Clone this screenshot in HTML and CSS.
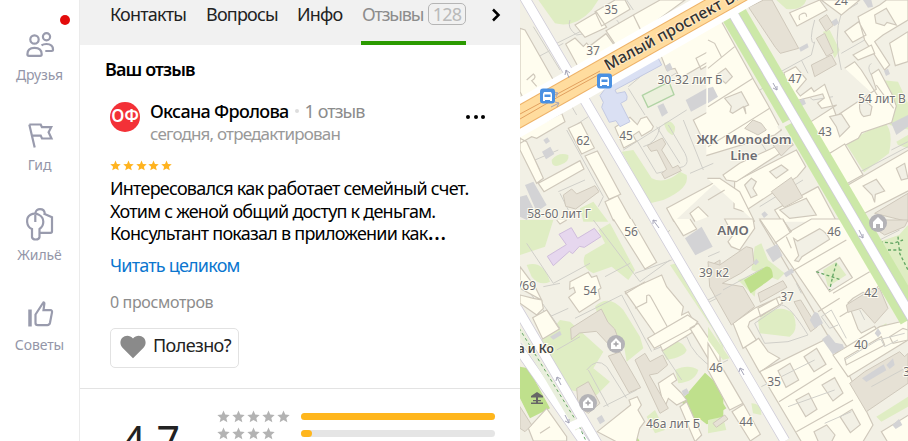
FILE: index.html
```
<!DOCTYPE html>
<html lang="ru">

<head>
    <meta charset="utf-8">
    <meta name="viewport" content="width=device-width, initial-scale=1.0">
    <title>Отзывы</title>
    <link rel="stylesheet" href="styles.css">
</head>

<body>

    <svg class="defs" width="0" height="0">
        <symbol id="star" viewBox="0 0 24 24">
            <path d="M12 1l3.2 7.5 8.2.7-6.2 5.4 1.9 8L12 18.300l-7.100 4.300 1.900-8L.6 9.200l8.200-.7z" />
        </symbol>
    </svg>

    <nav class="sidebar">
        <a class="side-item">
            <svg class="side-icon" viewBox="0 0 30 30">
                <circle cx="9.500" cy="10.500" r="4.200" />
                <circle cx="21.500" cy="7.800" r="3.600" />
                <path d="M2.400 25.300c0-4 2.600-6.500 7.100-6.500s7.200 2.500 7.200 6.500c0 1-.5 1.500-1.500 1.500H4c-1 0-1.600-.5-1.600-1.500z" />
                <path d="M16.500 16.300c1.200-.9 3-1.300 5-1.300 4 0 6.500 2.200 6.500 5.600 0 1-.4 1.400-1.400 1.400h-6.300" />
            </svg>
            <span>Друзья</span>
            <i class="dot"></i>
        </a>
        <a class="side-item">
            <svg class="side-icon" viewBox="0 0 30 30">
                <path d="M4.300 5.500l5.400 23M4.300 5.500h11.400l1.200 2.700h9.300l-2.600 5 2.900 6.300H17l-1.300-2.900H7" />
            </svg>
            <span>Гид</span>
        </a>
        <a class="side-item">
            <svg class="side-icon tall" viewBox="0 0 30 36">
                <path d="M10.500 7c.2-5 8.700-5.500 9.300.5M18.500 7.500l8.500 3.800v14c0 1-.5 1.500-1.500 1.500H15" />
                <path d="M7 23C1 20.500.5 11.500 5.500 8.800c5.700-3 12.800.8 12.800 7 0 3.200-1.600 5.800-3.800 7.200v8c-.5 3.300-7 3.300-7.500 0zM10.300 9v7" />
            </svg>
            <span>Жильё</span>
        </a>
        <a class="side-item">
            <svg class="side-icon" viewBox="0 0 30 30">
                <path class="thick" d="M5 10.500v17" />
                <path d="M10.500 15.500l7.500-11.500c.6-1 1.400-.5 1.400.5l-.9 6.600h6.800c1.500 0 2 1 1.700 2.300L25 23.800c-.4 1.700-1 2.300-2.600 2.300h-9.600c-1.600 0-2.300-.6-2.300-2.200z" />
            </svg>
            <span>Советы</span>
        </a>
    </nav>

    <main class="panel">
        <header class="tabs">
            <a class="tab tab-contacts">Контакты</a>
            <a class="tab tab-questions">Вопросы</a>
            <a class="tab tab-info">Инфо</a>
            <a class="tab active">Отзывы <span class="count">128</span></a>
            <svg class="next" viewBox="0 0 10 14">
                <path d="M2 1.500L7.500 7 2 12.500" />
            </svg>
        </header>

        <section class="review">
            <h2>Ваш отзыв</h2>
            <div class="author">
                <div class="avatar">ОФ</div>
                <div class="who">
                    <p class="name"><b>Оксана Фролова</b><i class="sep"></i><span>1 отзыв</span></p>
                    <p class="date">сегодня, отредактирован</p>
                </div>
                <div class="more"><i></i><i></i><i></i></div>
            </div>
            <div class="stars gold">
                <svg><use href="#star" /></svg><svg><use href="#star" /></svg><svg><use href="#star" /></svg><svg><use href="#star" /></svg><svg><use href="#star" /></svg>
            </div>
            <p class="text">Интересовался как работает семейный счет.<br>Хотим с женой общий доступ к деньгам.<br>Консультант показал в приложении как<span class="dots">…</span></p>
            <a class="read">Читать целиком</a>
            <p class="views">0 просмотров</p>
            <button class="useful">
                <svg viewBox="0 0 26 24">
                    <path d="M13 23.300L2.500 12.800C-.3 9.800-.2 5.300 2.300 2.800 5.200-.1 10-.1 13 3.400 16-.1 20.800-.1 23.700 2.800c2.500 2.500 2.600 7-.2 10z" />
                </svg>
                <span>Полезно?</span>
            </button>
        </section>

        <section class="rating">
            <div class="score">4,7</div>
            <div class="rows">
                <div class="row">
                    <div class="stars">
                        <svg><use href="#star" /></svg><svg><use href="#star" /></svg><svg><use href="#star" /></svg><svg><use href="#star" /></svg><svg><use href="#star" /></svg>
                    </div>
                    <div class="bar"><div class="fill" style="width: 100%"></div></div>
                </div>
                <div class="row">
                    <div class="stars">
                        <svg><use href="#star" /></svg><svg><use href="#star" /></svg><svg><use href="#star" /></svg><svg><use href="#star" /></svg>
                    </div>
                    <div class="bar"><div class="fill" style="width: 5.700%"></div></div>
                </div>
            </div>
        </section>
    </main>

    <svg class="map" viewBox="520 0 388 441">
        <defs>
            <path id="avenue" d="M608 71L780 -23" />
        </defs>

        <!-- north-west blocks -->
        <g transform="translate(520 0) scale(.33333)">
            <path class="park" d="M55 0l50 70q60 15 110-40l20-30zM305 455l35-5 55 85q40 20 85-20l20 10q10 40-70 75l-40 10zM95 480q20-25 50-15 5 20-25 30-25 10-25-15zM432 370q20-15 33 10 0 20-8 26-20-10-25-36zM180 625l40-20 45 60h-75z" />
            <path class="path" d="M40 80l80 130M0 200l130-70M110 130l70-35M150 60q-10 25 20 45l60-10M320 0l20 30M290 60l55 70M325 260l60-50M325 265l50 80M500 100l20 90-70 40M500 330L310 450M370 440q40-10 50-60M350 420l60 100 80-20q20-10 5-40l-50-85M45 480l70-30M45 480l15 30M140 390l110 200-15 30M115 575l80-35M120 580l30 60M410 380l70 110M490 360l60 150M150 310l20 35M160 380l45-30M510 520l70-30M0 430l55 110" />
            <g class="house">
                <path d="M165 75l65-38 30 45-65 30zM225 35l60-35h30l15 28-85 50zM340 45L420 0h75l-130 95zM258 92l82-47 24 50-75 43zM137 132l28-18 25 25 10-10 8 10 50-38 30 42-110 64zM0 85l15 5 85 150-90 55-10-20zM20 240l20-18q12 10-5 20l15 17" />
                <path d="M125 340l10 25-85 50-15-5-35 20v-25zM145 385l38-18 40 77-38 18zM195 468l37-15 70 130-35 15zM255 605l38-18 42 75h-55zM55 550l125-68 12 25-120 68zM0 415l20 10 50 110-20 15-50-100z" />
                <path d="M420 160l180-105v110l-120 70-15-30-25 5zM528 175l50-27 17 30-52 30zM285 382l45-30 22 22 10-18 18-6 20 30-5 10-30 18-8-14-18 12 10 18-38 20zM520 360l45-25 7 12 28-15v60l-50 30z" />
                <path class="open" d="M462 665l-22-40 130-70 32-20M525 665l-15-25 25-20 30 30" />
            </g>
            <path class="stone" d="M382 437l45-23 10 18-12 18 33 54 16-8 10 16-50 24-9-16 15-12-29-58-18 4zM130 585l25-18 15 15 55-25 12 18-70 52-30-8z" />
            <path class="grey" d="M497 300l80-45 18 35-82 45zM412 318l18-8 14 28-18 12zM435 198l15-10 8 18-16 10zM70 420l12-8 8 12-12 8zM66 455l25-15 12 22-25 16zM15 555l25-10 40 70-30 20zM0 590l20-5 25 50-25 25-20-10z" />
            <path class="blue" d="M275 240l135-75 15 30-140 75 5 10 25-5q10 15 5 25l-18 10 28 55-30 15-12-18-20 5-23-45 5-15-10-20z" />
            <path class="court" d="M367 286l80-40 15 38-78 38z" />
        </g>

        <!-- north-east blocks -->
        <g transform="translate(708 0) scale(.33333)">
            <path class="park" d="M205 0l30 27q50 5 60-27zM345 95l20-5 30 60-15 25zM413 430l115-65q30 25 15 95l-75 57zM520 240l50 5 35 75v70l-60-15-25-60zM565 425l35-20v40l-30-10z" />
            <path class="path" d="M320 60q-20 70 0 70M200 225l110-60 10-40M280 180l20 40M400 210q-25-100 0-170l50-30M400 160l70-40 50-40M275 290q20-10 40 10l60-10M0 240l65-40M490 190q-15 10 0 35M0 360l190-110M20 440l110-60M410 540L600 440M155 620l130-80M160 430l20 30M550 450l50-25" />
            <g class="house">
                <path class="open" d="M-5 72l40-17 105 190 40 70 40 75-20 15-205 62" />
                <path class="line" d="M0 205l80-65M0 320l135-85M0 440l185-115M0 120l20 10 20 40" />
                <path class="yard" d="M25 225l28-20 20 25-20 20zM50 295l50-20 22 40-12 5 4 22-8-22-32 20-8-5 4-16z" />
                <path d="M245 38l90-38 22 30-90 48zM275 60q-5-15 5-18 15-8 16 8M340 0l60 45L455 0zM450 50l65-35 20-15h65v60l-75 45-25 20 45 70-15 15-60-90zM410 95l42-30 22 40-40 22zM545 130l55-35v90l-38 12z" />
                <path class="yard" d="M500 45l35-20 30 50-28-8-8 10-25-8z" />
                <path d="M228 218l35-18 32 38-30 35 12 15 33-25 8 12 32-22 35 95 120-80-15-45 22-15 40 75 13 35-14 50-90 30-10 17-95 50-55-95 85-55-45 10-12-16 20-15-5-12-98 25zM410 205l30-20 20 25 60 95M435 165l55-30 10 25-50 20zM505 255l52 70" />
                <path class="yard" d="M365 350l35-8 25 38-30 30-10-30zM455 310l15-10 22 20-5 25-20 5q-15-12-12-40z" />
                <path d="M362 462l48-30 55 92-50 28z" />
                <path class="open" d="M602 450l-182 105 45 87 137-70" />
                <path class="yard" d="M465 558l40-20 25 35-28 10-2 24-8-22zM565 505l25-15 10 45-20 5z" />
                <path d="M80 545l185-95 28 50-25 30-160 105-30-10z" />
                <path class="yard" d="M185 515l35-20 20 15-35 25zM110 555l20-20 15 10-10 20 12 20-18 8z" />
                <path class="open" d="M222 665l-22-35 130-70 56 105M45 525l50-35 150-70 10 15-170 110-30-5zM-2 535h37l60 40 45 90" />
                <path class="yard" d="M215 630l80-35 30 50-80 10z" />
                <path class="line" d="M0 600l50-30" />
            </g>
            <path class="stone" d="M122 22l45-22h25l80 145-55 15-15-18zM333 60l23-16 20 32-22 18zM325 115l25-15 26 57-20 12zM310 195l60-30 15 28-65 37zM190 575l60-43 34 60-55 30zM500 640l100-60v85zM110 385l25-25 25 10 15 20-25 15zM195 435l40-22 20 20-35 35z" />
            <path class="grey" d="M273 143l25-13 4 12-24 13zM370 65l15-10 8 14-14 10zM465 0h25l5 20-15 3zM272 303l15-8 7 16-15 8zM550 370l50-25v35l-35 25zM0 265l15-5 15 30-30 20zM528 212l12-6 6 16-12 6zM160 642l10-8 10 10-12 10z" />
        </g>

        <!-- south-west blocks -->
        <g transform="translate(520 220) scale(.33333)">
            <path class="park" d="M0 0h100l-25 80-75 25zM195 105l60-35-20-40 35-20 75 140-20 30-50-40-55 20q-40-20-25-55zM20 135q50-15 70 50-30 15-55-15zM225 260q40-40 85 10l50 80 10 35-50 40-10-60-40 20-30-85zM120 300l30 5 100 90-30 50 50 40-40 40-110-20-40-70-20-70 30-30zM425 390q50-50 75 0-5 20-60 30zM465 450q40-20 70 0-10 35-60 40zM450 135l20-5 140 230v30l-30-60zM380 590l25-20 30 60-30 10z" />
            <path class="green" d="M485 540l70-82 55 50v95l-50 10-25-20-30 10zM0 440l25 5 65 120-60 30-30-60zM300 650l35-25 25 40h-60z" />
            <path class="path" d="M20 70l80 120 110-60M220 0l140 185 90-65M70 200l50-10M90 290l55-25M165 295l140-70M305 225l90 170M200 450q30-40 60-10l60 95M205 450l60 110M400 390l100-40q20 60 90 100M425 390l60 90M540 260l60-30M345 160l110-40M440 40l10-10M255 170l75-40M110 390l70-40M250 560l100-50M0 180l100 130M60 240l60 85" />
            <g class="house">
                <path class="open" d="M280-3l95 150 35-20-75-130M458-3l32 50 40-20-20-30M110 0l10 12 20-12" />
                <path d="M150 185l55-28 10 15 15-5 13 37-8 5 5 28-62 40-32-45 20-15-5-15-12 5zM315 215l110-50 15 35 50 60-5 25 20-10 28 52-105 65-20-45z" />
                <path class="line" d="M315 222l60-37M345 265l35-18v-20q8-5 12 3l50 90" />
                <path d="M383 355l120-70 30 20-10 15-120 65zM510 325l25-15 65 95v70z" />
                <path d="M0 225l40 10 25 5 5 25-20 20L0 250zM38 293l42-23 38 57-50 30zM0 140l45 60 20 40-65-35zM25 625l55-60 60 85v13H40zM60 640l30-20M232 635l100-80-5-15 25-10 12 25-10 15 20 35-15 20-10 40h-60zM415 490l45-30 10 20-15 10 30 30 15 20-30 15-25-20-12 30zM480 560l20-15 45 100-20 20z" />
            </g>
            <path class="pink" d="M117 43l37-20 19 32 50-30 20 25-50 32-15-3-20 22-10-7-48 43-18-28 57-35z" />
            <path class="stone" d="M152 325l92-58 20 40 20 20 15 40-25 15-45-48-50 5-25 20zM265 408l35-12 62 107-35 15zM170 505l35-20 35 65-35 30-30-20zM345 420l30-20 15 25 38-20 15 30-30 25-25 5 57 100-25 15zM565 140l35-20v110h-5zM0 560l35 55-20 20-15-10z" />
            <path class="grey" d="M495 55l50-35 33 60-52 26zM90 350l30-18 5 12-25 15zM230 595l15-10 10 18-15 10zM485 513l15-8 8 14-16 10z" />
        </g>

        <!-- south-east blocks -->
        <g transform="translate(708 220) scale(.33333)">
            <path class="park" d="M140 80l20-10 20 50 50 40-20 20-80-30zM90 180l60-20-10 70zM513 65l60-20 27-30v195q-70-50-87-145zM505 590l95-60v30l-80 45zM515 320l20-10 5 30zM130 550q30 0 30 35l-25-5zM0 600l45-10 10 40-55 10zM0 320l65 95-20 5-45-60z" />
            <path class="green" d="M0 480l55 85-55 35z" />
            <g class="house">
                <path class="open" d="M50-3h85l5 28-45 65-25-10-10-15 15-20z" />
                <path d="M155-3h70l20 38 65-38h90l100 170 15 25-20 30-30-5-30 18-15 14 30 78 10 12 40-20 10 18-70 42-20 6z" />
                <path class="line" d="M155 0l245 415M225 0l25 35-50 35M250 155l165-95M235 50l15 35M375 220l110-65M330 275l65-40M395 290l30-18" />
                <path class="yard" d="M257 55l12 8 66-37q20 10 30 32l-83 52-10 15-12-3 12-15zM325 155l70-42 38 60-68 42z" />
                <path d="M75 310l65-45 75-35 8 20-98 55-5 15 25 40-40 25zM150 265l55-30 8 20-55 35zM112 380l40-25 28 40 35 20-60 42z" />
                <path d="M155 455l200-98 50 70 90 188-30 50H280z" />
                <path class="line" d="M213 545l160-100M265 635l170-95" />
                <path d="M375 405l140-85 85-20v60l-180 110zM410 415l110-65 10 25-115 60z" />
                <path d="M545 350l40-25 15 5v30l-45 10zM0 370l105 180-40 20L0 450zM72 575l35-22 50 90-30 20zM520 635l85-52v85h-65z" />
            </g>
            <path class="park" d="M150 300q60-55 105-20 20 50-10 70l-90-10zM345 150l40-25 30 40-55 35z" />
            <path class="stone" d="M0 125l35 10 80-55 18 5 5 45-40 30-55 30 62 10 35 60-70 55L5 200zM150 220l75-38 12 20-80 45zM258 245l20-5 50 80-20 15zM415 255l65-40 35-10 25 60-40 45-40-45-40 12zM425 490l45-35 105-60 15 15 10-10v90l-125 85zM490 0h110l-10 20-60 25-30-20zM15 610l35-25 10 12-35 25z" />
            <path class="lawn" d="M210 452l36-22 26 50-38 22zM288 410l38-25 28 48-36 22zM264 540l38-20 25 48-34 22zM342 495l38-22 25 46-30 24zM396 590l36-22 25 46-30 24zM318 635l38-20 25 30-10 20h-40z" />
            <path class="green" d="M108 180l65-40q20-5 22 30-2 5-67 50z" />
            <path class="grey" d="M173 90l35-18 15 35-28 20zM227 160l25-15 6 12-24 15zM305 300l15-25 10 5 15 30-25 15zM342 358l20-15 20 25 22 5 5 12-35 18zM462 475l65-42 8 18-60 35zM535 435l20-20 5 20-15 12zM135 128l10-12 8 10-10 10zM500 340l10-15 10 15-10 12zM553 615l20-18 10 18-20 12z" />
            <path class="path" d="M45 210l120-65M140 310l80-55q25 0 80 90l-60 20-70 5zM265 190l15 30M340 290l30-20 45 85M340 290l25 35 25-10M455 270l15 30M410 420l100-60 80-20M490 500l110-60M0 240l40-20M0 450l60-30M520 360l10 20 40-20M160 500l160-80M240 560l140-50M350 610l80-35M515 60l60-30M500 70l100 130M0 110l35-15" />
            <path class="trail" d="M325 155l30 10 45 15M385 130l-10 35-10 45M515 65l40 5 30-10M570 50l5 50 25 50M540 90l45 0" />
        </g>

        <!-- greenery along the second line -->
        <path class="verge" d="M733 13L912 318" />
        <path class="gap" d="M778 128L795 119" />

        <!-- streets -->
        <path class="street-edge" d="M523-5L785 441M728 5L912 318M517 308L598 445M517 346L586 445" />
        <path class="street" d="M523-5L785 441M728 5L912 318M517 308L598 445M517 346L586 445" />
        <path class="median" d="M520 331L578 429" />
        <path class="trail" d="M519 328L578 424M579 426L586 441" />
        <path class="street" d="M570 427L586 420" />

        <!-- avenue -->
        <path class="avenue-side" d="M510 123L765-22" />
        <path class="avenue-edge" d="M510 122L765-22" />
        <path class="avenue" d="M510 122L765-22" />
        <path class="avenue-mid" d="M520 119L558 97 600 74M520 114L600 71" />
        <path class="arrow" d="M551 107l8-4-4-1m4 1l-2 4M550 97l8-4-4-1m4 1l-2 4M569 78l-3-8-1 5m1-5l4 3M659 228l-6-8v4m0-4l4 1M561 385l-4-8-1 4m1-4l4 2M565 415l4 8v-4m0 4l-4-2M773 83l4 7v-4m0 4l-4-2M744 375l-4-7-1 4m1-4l4 2M859 230l4 8v-4m0 4l-4-2" />

        <!-- stops and places -->
        <g class="stop">
            <rect x="540" y="88.500" width="15" height="15" rx="3" />
            <rect x="597" y="73.500" width="15" height="15" rx="3" />
            <path d="M544 92h7l1 2v7h-2v-1h-5v1h-2v-7zM601 77h7l1 2v7h-2v-1h-5v1h-2v-7z" />
            <path class="glass" d="M544.500 94.500h6v2.500h-6zM601.500 79.500h6v2.500h-6z" />
        </g>
        <g class="place">
            <circle cx="616" cy="344" r="9" />
            <circle cx="588" cy="403" r="9" />
            <circle cx="878" cy="223" r="9" />
            <path d="M611 343l5-5 5 5v6h-10zM583 402l5-5 5 5v6h-10zM873 222l5-5 5 5v6h-3v-4h-4v4h-3z" />
            <path class="cross" d="M616 341.500v5M613.500 344h5M588 400.500v5M585.500 403h5" />
        </g>
        <path class="carousel" d="M531 396l6-4 6 4v1.500h-12zM536 396h2v7h-2zM533 400h8v1.200h-8zM531 402.500h12v1.500h-12z" />

        <g class="num">
            <text x="611" y="14">35</text>
            <text x="593" y="55">37</text>
            <text x="690" y="84">30-32 лит Б</text>
            <text x="626" y="140">45</text>
            <text x="583" y="145">62</text>
            <text x="559" y="218">58-60 лит Г</text>
            <text x="841" y="5">24</text>
            <text x="795" y="83">47</text>
            <text x="882" y="103">54 лит В</text>
            <text x="825" y="136">43</text>
            <text x="631" y="236">56</text>
            <text x="590" y="295">54</text>
            <text x="527" y="290">/69</text>
            <text x="714" y="277">39 к2</text>
            <text x="673" y="428">46а лит Б</text>
            <text x="834" y="236">46</text>
            <text x="871" y="297">42</text>
            <text x="787" y="301">37</text>
            <text x="861" y="349">40</text>
            <text x="774" y="386">35</text>
            <text x="716" y="372">46</text>
            <text x="746" y="426">44</text>
            <text x="910" y="376">37</text>
        </g>
        <g class="label">
            <text x="744" y="144" xml:space="preserve">ЖК  Monodom</text>
            <text x="744" y="160">Line</text>
            <text x="733" y="235">АМО</text>
            <text class="dark" x="532" y="353">на и Ко</text>
        </g>
        <text class="avenue-name"><textPath href="#avenue">Малый проспект В.О.</textPath></text>
    </svg>

</body>

</html>
```

FILE: styles.css
```
* {
    box-sizing: border-box;
}

body {
    margin: 0;
    display: flex;
    width: 908px;
    height: 441px;
    overflow: hidden;
    background: #fff;
    font-family: "Noto Sans", "Open Sans", sans-serif;
    color: #000;
}

h2,
p {
    margin: 0;
    font-weight: 400;
}

.defs {
    position: absolute;
}

/* sidebar */

.sidebar {
    flex: none;
    width: 80px;
    padding-top: 29px;
    border-right: 1px solid #ebebeb;
}

.side-item {
    position: relative;
    display: flex;
    flex-direction: column;
    align-items: center;
    height: 90px;
    font-size: 14px;
    line-height: 20px;
    letter-spacing: -.1px;
    color: #9496a8;
}

.side-item span {
    margin-top: 6px;
}

.side-icon {
    width: 30px;
    height: 30px;
    fill: none;
    stroke: #999bad;
    stroke-width: 2.200;
}

.side-icon.tall {
    height: 36px;
    margin: -3px 0;
}

.side-icon .thick {
    stroke-width: 3.500;
}

.dot {
    position: absolute;
    left: 60px;
    top: -14px;
    width: 10px;
    height: 10px;
    border-radius: 50%;
    background: #e30b0b;
}

/* panel */

.panel {
    flex: none;
    width: 440px;
    height: 441px;
    overflow: hidden;
}

.tabs {
    display: flex;
    height: 45px;
    padding-left: 30px;
    background: #f1f1f1;
    font-size: 18px;
    line-height: 29px;
    letter-spacing: -.8px;
    color: #222;
}

.tab {
    flex: none;
    white-space: nowrap;
}

.tab-contacts {
    width: 96px;
}

.tab-questions {
    width: 91px;
}

.tab-info {
    width: 64px;
}

.tab.active {
    display: flex;
    justify-content: space-between;
    width: 105px;
    padding-left: 1px;
    border-bottom: 4px solid #2b9a00;
    color: #8c8c8c;
    letter-spacing: -1.200px;
}

.count {
    width: 38px;
    height: 22px;
    margin-top: 3px;
    border: 1px solid #b5b5b5;
    border-radius: 5px;
    line-height: 21px;
    text-align: center;
    letter-spacing: -.8px;
    color: #bababa;
}

.next {
    width: 10px;
    height: 14px;
    margin: 8px 0 0 25px;
    fill: none;
    stroke: #000;
    stroke-width: 2.500;
}

.review {
    height: 344px;
    padding: 11px 30px 0;
    border-bottom: 1px solid #e3e3e3;
}

.review h2 {
    margin-left: -5px;
    font-size: 18px;
    font-weight: 600;
    line-height: 26px;
    letter-spacing: -.9px;
}

.author {
    display: flex;
    height: 60px;
    padding-top: 18px;
}

.avatar {
    width: 30px;
    height: 30px;
    margin-top: 2px;
    border-radius: 50%;
    background: #f33137;
    color: #fff;
    font-size: 17px;
    font-weight: 600;
    line-height: 27px;
    text-align: center;
    letter-spacing: -.3px;
}

.who {
    margin-left: 10px;
    width: 315px;
}

.name {
    display: flex;
    align-items: center;
    font-size: 18px;
    line-height: 22px;
    letter-spacing: -.68px;
    color: #8c8c8c;
}

.name b {
    font-weight: 500;
    color: #000;
}

.name span {
    letter-spacing: -.95px;
}

.sep {
    width: 4px;
    height: 4px;
    margin: 0 6px;
    border-radius: 50%;
    background: #ddd;
}

.date {
    margin-top: 1px;
    font-size: 17px;
    line-height: 22px;
    letter-spacing: -.82px;
    color: #999;
}

.more {
    display: flex;
    gap: 3.500px;
    padding-top: 15px;
    margin-left: 1px;
}

.more i {
    width: 4px;
    height: 4px;
    border-radius: 50%;
    background: #000;
}

.stars {
    display: flex;
    gap: 2px;
    fill: #b3b3b3;
}

.stars svg {
    width: 13px;
    height: 13px;
}

.stars.gold {
    gap: 1.800px;
    margin-top: 18px;
    fill: #ffb31f;
}

.stars.gold svg {
    width: 11px;
    height: 11px;
}

.text {
    margin-top: 6px;
    font-size: 18px;
    line-height: 22.500px;
    letter-spacing: -.77px;
    white-space: nowrap;
}

.dots {
    letter-spacing: 0;
    font-size: 24px;
    line-height: 1px;
}

.read {
    display: block;
    margin-top: 9px;
    font-size: 18px;
    line-height: 22px;
    letter-spacing: -.8px;
    color: #0b76cf;
}

.views {
    margin-top: 16px;
    font-size: 16px;
    line-height: 20px;
    letter-spacing: -.35px;
    color: #8c8c8c;
}

.useful {
    display: flex;
    align-items: center;
    width: 129px;
    height: 40px;
    margin-top: 16px;
    padding: 0 0 5px 9px;
    border: 1px solid #e2e2e2;
    border-radius: 5px;
    background: #fff;
    font: 18px "Noto Sans", sans-serif;
    letter-spacing: -.6px;
    color: #222;
}

.useful svg {
    width: 26px;
    height: 24px;
    margin: 4px 7px 0 0;
    fill: #8a8a8a;
}

.rating {
    display: flex;
    padding-left: 42px;
}

.score {
    width: 95px;
    padding-top: 26px;
    font-size: 41px;
    line-height: 50px;
    letter-spacing: 0;
    color: #222;
}

.rows {
    padding-top: 19px;
}

.row {
    display: flex;
    align-items: center;
    width: 278px;
    height: 17px;
}

.row .stars {
    width: 84px;
}

.bar {
    width: 194px;
    height: 7px;
    border-radius: 4px;
    background: #e5e5e5;
}

.fill {
    height: 7px;
    border-radius: 4px;
    background: #ffb61c;
}

/* map */

.map {
    flex: none;
    width: 388px;
    height: 441px;
    background: #f2f0e5;
}

.map path {
    fill: none;
}

.map .park {
    fill: #dfedc3;
}

.map .green {
    fill: #bfe08c;
}

.map .house path {
    fill: #fffdef;
    stroke: #cfc8bb;
    stroke-width: 3.500;
}

.map .house .line {
    fill: none;
}

.map .house .yard {
    fill: #f2f0e5;
}

.map .stone {
    fill: #e6e1d5;
    stroke: #cfc8bb;
    stroke-width: 3;
}

.map .lawn {
    fill: #f2f0e5;
    stroke: #cfc8bb;
    stroke-width: 3.500;
}

.map .grey {
    fill: #d3d3d5;
}

.map .blue {
    fill: #dae0f3;
    stroke: #c3c9e2;
    stroke-width: 3;
}

.map .pink {
    fill: #e6d7ee;
    stroke: #cfbcdc;
    stroke-width: 3;
}

.map .court {
    fill: #ebf0dc;
    stroke: #b0d3a4;
    stroke-width: 4;
}

.map .path {
    stroke: #d0cfc9;
    stroke-width: 3;
}

.map .verge {
    stroke: #cce8a8;
    stroke-width: 26;
}

.map .gap {
    stroke: #f2f0e5;
    stroke-width: 4;
}

.map .street-edge {
    stroke: #cfccd8;
    stroke-width: 10.500;
}

.map .street {
    stroke: #fff;
    stroke-width: 9;
}

.map .median {
    stroke: #e9efdc;
    stroke-width: 6;
}

.map .trail {
    stroke: #66a765;
    stroke-width: 1;
    stroke-dasharray: 3 3;
}

.map g .trail {
    stroke-width: 4;
    stroke-dasharray: 9 7;
}

.map .avenue-side {
    stroke: #fff;
    stroke-width: 35;
}

.map .avenue-edge {
    stroke: #eeb268;
    stroke-width: 21.500;
}

.map .avenue {
    stroke: #ffdc9e;
    stroke-width: 19.500;
}

.map .avenue-mid {
    stroke: #e2a05f;
    stroke-width: 1;
}

.map .arrow {
    stroke: #a5a5b8;
    stroke-width: 1;
}

.stop rect {
    fill: #4a90e2;
}

.map .stop path {
    fill: #fff;
}

.map .stop .glass {
    fill: #4a90e2;
}

.place circle {
    fill: #b4b3b7;
}

.map .place path {
    fill: #fff;
}

.map .place .cross {
    stroke: #a5a4a8;
    stroke-width: 1.500;
}

.map .carousel {
    fill: #666;
}

.num text,
.label text {
    font-size: 12px;
    text-anchor: middle;
    fill: #6f6f73;
    stroke: #fffdf2;
    stroke-width: 2px;
    paint-order: stroke;
}

.label text {
    font-size: 13.300px;
    font-weight: 600;
    fill: #6c6c72;
}

.label .dark {
    font-size: 12px;
    fill: #444;
}

.avenue-name {
    font-size: 15.800px;
    font-weight: 500;
    fill: #333;
    stroke: #ffe9c4;
    stroke-width: 2px;
    paint-order: stroke;
}
```
